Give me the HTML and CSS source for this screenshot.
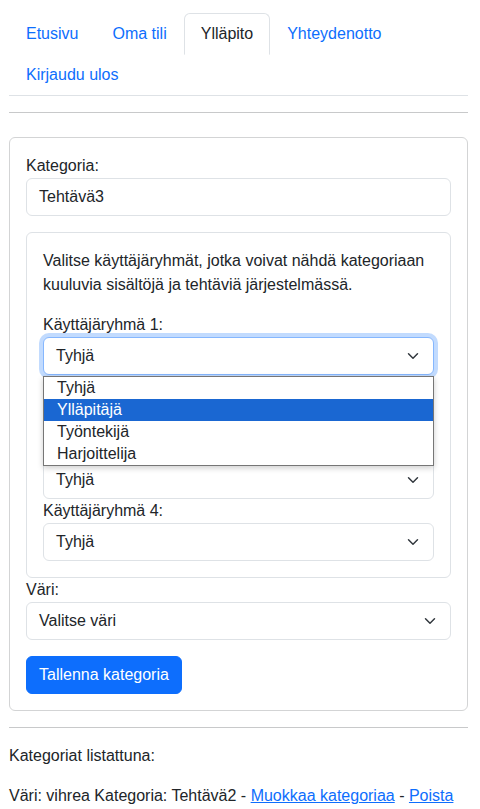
FILE: index.html
```html
<!DOCTYPE html>
<html lang="fi">
<head>
<meta charset="utf-8">
<title>Ylläpito</title>
<link rel="stylesheet" href="styles.css">
</head>
<body>
<div class="page">
  <ul class="tabs">
    <li><a class="tab" href="#">Etusivu</a></li>
    <li><a class="tab" href="#">Oma tili</a></li>
    <li><a class="tab active" href="#">Ylläpito</a></li>
    <li><a class="tab" href="#">Yhteydenotto</a></li>
    <li><a class="tab" href="#">Kirjaudu ulos</a></li>
  </ul>
  <hr class="rule">
  <div class="card">
    <label class="label">Kategoria:</label>
    <div class="control">Tehtävä3</div>
    <div class="groupbox">
      <p class="intro">Valitse käyttäjäryhmät, jotka voivat nähdä kategoriaan kuuluvia sisältöjä ja tehtäviä järjestelmässä.</p>
      <label class="label">Käyttäjäryhmä 1:</label>
      <div class="select-wrap">
        <div class="control select focus">Tyhjä</div>
        <ul class="popup">
          <li>Tyhjä</li>
          <li class="hl">Ylläpitäjä</li>
          <li>Työntekijä</li>
          <li>Harjoittelija</li>
        </ul>
      </div>
      <label class="label covered">Käyttäjäryhmä 2:</label>
      <div class="control select covered">Tyhjä</div>
      <label class="label covered">Käyttäjäryhmä 3:</label>
      <div class="control select">Tyhjä</div>
      <label class="label">Käyttäjäryhmä 4:</label>
      <div class="control select">Tyhjä</div>
    </div>
    <label class="label">Väri:</label>
    <div class="control select">Valitse väri</div>
    <button class="btn">Tallenna kategoria</button>
  </div>
  <hr class="rule rule-gap">
  <p class="text">Kategoriat listattuna:</p>
  <p class="text">Väri: vihrea Kategoria: Tehtävä2 - <a href="#">Muokkaa kategoriaa</a> - <a href="#">Poista</a></p>
</div>
</body>
</html>
```
FILE: styles.css
```css
* { box-sizing: border-box; }
html, body { margin: 0; padding: 0; background: #fff; }
body {
  font-family: "Liberation Sans", Arial, sans-serif;
  font-size: 16px;
  line-height: 24px;
  color: #212529;
}
.page { padding: 13px 12px 0 9px; }
.tabs {
  list-style: none;
  margin: 0;
  padding: 0;
  display: flex;
  flex-wrap: wrap;
  border-bottom: 1px solid #dee2e6;
}
.tab {
  display: block;
  padding: 8px 16px;
  border: 1px solid transparent;
  border-radius: 6px 6px 0 0;
  margin-bottom: -1px;
  color: #0d6efd;
  text-decoration: none;
}
.tab.active {
  color: #212529;
  border-color: #dee2e6 #dee2e6 #fff;
  background: #fff;
}
.rule {
  margin: 16px 0 24px;
  border: 0;
  border-top: 1px solid #c8c9ca;
}
.rule-gap { margin: 16px 0; }
.card {
  border: 1px solid #d3d4d5;
  border-radius: 6px;
  padding: 16px;
  display: flex;
  flex-direction: column;
  align-items: stretch;
}
.label { display: block; }
.covered { visibility: hidden; }
.control {
  height: 38px;
  border: 1px solid #dee2e6;
  border-radius: 6px;
  padding: 6px 12px;
  background: #fff;
}
.select {
  padding-right: 36px;
  background-image: url("data:image/svg+xml,%3csvg xmlns='http://www.w3.org/2000/svg' viewBox='0 0 16 16'%3e%3cpath fill='none' stroke='%23343a40' stroke-linecap='round' stroke-linejoin='round' stroke-width='2' d='m2 5 6 6 6-6'/%3e%3c/svg%3e");
  background-repeat: no-repeat;
  background-position: right 12px center;
  background-size: 16px 12px;
}
.select.focus {
  border-color: #86b7fe;
  box-shadow: 0 0 0 4px rgba(13, 110, 253, .25);
}
.groupbox {
  margin: 16px 0 0;
  border: 1px solid #dee2e6;
  border-radius: 6px;
  padding: 16px;
}
.intro { margin: 0 0 16px; }
.select-wrap { position: relative; }
.popup {
  position: absolute;
  left: 0;
  right: 0;
  top: calc(100% + 1px);
  margin: 0;
  padding: 0;
  list-style: none;
  background: #fff;
  border: 1px solid #767676;
  box-shadow: 0 2px 6px rgba(0, 0, 0, .2);
  z-index: 5;
}
.popup li {
  height: 22px;
  line-height: 22px;
  padding-left: 13px;
}
.popup li.hl { background: #1a67d2; color: #fff; }
.btn {
  align-self: flex-start;
  margin-top: 16px;
  font: inherit;
  line-height: 24px;
  padding: 6px 12px;
  border: 1px solid #0d6efd;
  border-radius: 6px;
  background: #0d6efd;
  color: #fff;
}
.text { margin: 0 0 16px; }
.text a { color: #0d6efd; }
```
